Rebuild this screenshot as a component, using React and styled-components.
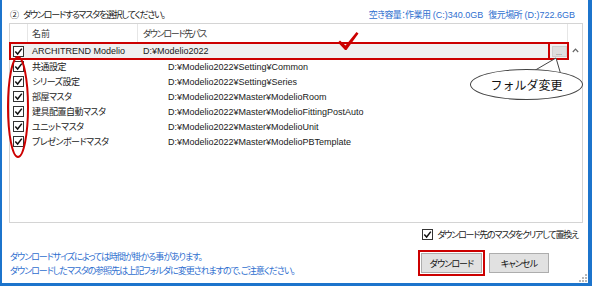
import React from "react";
import styled, { createGlobalStyle } from "styled-components";

const FONT = `"Liberation Sans", "Noto Sans CJK JP", sans-serif`;
const RED = "#cc0000";
const BLUE = "#1c74cc";
const BLUE_TEXT = "#2f6fcf";

const Global = createGlobalStyle`
  html, body { margin: 0; padding: 0; background: #fff; }
  body { font-family: ${FONT}; }
`;

const Stage = styled.div`
  position: relative;
  width: 592px;
  height: 286px;
`;

const Window = styled.div`
  width: 592px;
  height: 286px;
  box-sizing: border-box;
  border-left: 2px solid ${BLUE};
  border-right: 4px solid ${BLUE};
  border-bottom: 3px solid ${BLUE};
  background: #fff;
  font-family: ${FONT};
  font-size: 9px;
  font-feature-settings: "palt";
  color: #1a1a1a;
  display: flex;
  flex-direction: column;
`;

const JP = styled.span`
  letter-spacing: ${(p) => p.$ls}px;
`;

const TopBar = styled.div`
  height: 23px;
  box-sizing: border-box;
  padding: 6px 13px 0 8px;
  display: flex;
  justify-content: space-between;
  align-items: center;
`;

const Title = styled.span`
  color: #222;
  letter-spacing: -1.2px;
`;

const StepNum = styled.span`
  margin-right: 4px;
  letter-spacing: 0;
`;

const Capacity = styled.span`
  color: ${BLUE_TEXT};
  white-space: pre;
`;

const List = styled.div`
  margin-left: 7px;
  width: 574px;
  height: 200px;
  box-sizing: border-box;
  border: 1px solid #d4d4d4;
  display: flex;
  flex-direction: column;
`;

const Header = styled.div`
  height: 19px;
  display: grid;
  grid-template-columns: 18px 110px 430px 1fr;
`;

const HeadCell = styled.div`
  box-sizing: border-box;
  border-right: ${(p) => (p.$last ? "none" : "1px solid #e6e6e6")};
  padding-left: ${(p) => p.$pad || 0}px;
  letter-spacing: ${(p) => p.$ls || 0}px;
  display: flex;
  align-items: center;
  color: #3a3a3a;
`;

const Body = styled.div`
  flex: 1;
  display: flex;
`;

const Rows = styled.div`
  width: 558px;
  display: flex;
  flex-direction: column;
`;

const Row = styled.div`
  height: ${(p) => p.$h}px;
  display: grid;
  grid-template-columns: 18px 110px 1fr auto;
  align-items: center;
  background: ${(p) => (p.$selected ? "#f0f0f0" : "transparent")};
  outline: ${(p) => (p.$selected ? `2px solid ${RED}` : "none")};
  outline-offset: -1px;
`;

const CheckCell = styled.div`
  display: flex;
  align-items: center;
  padding-left: 3px;
`;

const NameCell = styled.div`
  padding-left: 4px;
  white-space: nowrap;
  letter-spacing: ${(p) => p.$ls || 0}px;
`;

const PathCell = styled.div`
  padding-left: ${(p) => p.$indent}px;
  white-space: nowrap;
`;

const ButtonCell = styled.div`
  width: 20px;
  height: 100%;
  box-sizing: border-box;
  border-left: 2px solid ${RED};
  display: flex;
  align-items: center;
  justify-content: center;
`;

const MiniButton = styled.div`
  width: 15px;
  height: 11px;
  box-sizing: border-box;
  background: #dedede;
  border: 1px solid #cfcfcf;
  font-size: 7px;
  line-height: 12px;
  text-align: center;
  color: #555;
`;

const ScrollCol = styled.div`
  flex: 1;
  display: flex;
  justify-content: center;
  padding-top: 5px;
`;

const Box = styled.span`
  width: 11px;
  height: 11px;
  box-sizing: border-box;
  border: 1px solid #333;
  background: #fff;
  display: inline-flex;
  align-items: center;
  justify-content: center;
  flex: none;
`;

const OptionRow = styled.div`
  margin-top: 5px;
  margin-right: 10px;
  align-self: flex-end;
  height: 12px;
  display: flex;
  align-items: center;
  gap: 4px;
  color: #222;
  letter-spacing: -1.2px;
`;

const BottomRow = styled.div`
  margin-top: 10px;
  display: flex;
  justify-content: space-between;
  align-items: flex-start;
  padding: 0 39px 0 8px;
`;

const Notes = styled.div`
  color: ${BLUE_TEXT};
  line-height: 14px;
  letter-spacing: -1.05px;
`;

const Buttons = styled.div`
  display: flex;
  gap: 4px;
  align-items: flex-start;
`;

const HighlightWrap = styled.div`
  border: 2px solid ${RED};
  padding: 1px;
`;

const Button = styled.button`
  width: ${(p) => p.$w}px;
  height: 20px;
  margin-top: ${(p) => p.$mt || 0}px;
  padding: 0;
  box-sizing: border-box;
  background: #e1e1e1;
  border: 1px solid #adadad;
  font-family: ${FONT};
  font-feature-settings: "palt";
  font-size: 9px;
  letter-spacing: -0.9px;
  color: #111;
`;

const Overlay = styled.svg`
  position: absolute;
  left: 0;
  top: 0;
  pointer-events: none;
`;

const Callout = styled.div`
  position: absolute;
  left: 470px;
  top: 69px;
  width: 113px;
  height: 31px;
  box-sizing: border-box;
  border: 1px solid #444;
  border-radius: 50%;
  background: #fff;
  display: flex;
  align-items: center;
  justify-content: center;
  font-family: "Noto Sans CJK JP", sans-serif;
  font-size: 12px;
  color: #111;
`;

const Grip = styled.svg`
  position: absolute;
  right: 5px;
  bottom: 4px;
`;

function Check() {
  return (
    <Box>
      <svg width="9" height="9" viewBox="0 0 9 9">
        <path d="M1.3 4.6 L3.6 7 L7.8 1.6" fill="none" stroke="#111" strokeWidth="1.5" />
      </svg>
    </Box>
  );
}

const children = [
  ["共通設定", "D:¥Modelio2022¥Setting¥Common"],
  ["シリーズ設定", "D:¥Modelio2022¥Setting¥Series"],
  ["部屋マスタ", "D:¥Modelio2022¥Master¥ModelioRoom"],
  ["建具配置自動マスタ", "D:¥Modelio2022¥Master¥ModelioFittingPostAuto"],
  ["ユニットマスタ", "D:¥Modelio2022¥Master¥ModelioUnit"],
  ["プレゼンボードマスタ", "D:¥Modelio2022¥Master¥ModelioPBTemplate"],
];

export default function App() {
  return (
    <>
      <Global />
      <Stage>
        <Window>
          <TopBar>
            <Title>
              <StepNum>②</StepNum>ダウンロードするマスタを選択してください。
            </Title>
            <Capacity>
              <JP $ls={-0.6}>空き容量：作業用</JP> (C:)340.0GB  <JP $ls={-0.6}>復元場所</JP> (D:)722.6GB
            </Capacity>
          </TopBar>
          <List>
            <Header>
              <HeadCell />
              <HeadCell $pad={4}>名前</HeadCell>
              <HeadCell $pad={5} $ls={-1.3}>ダウンロード先パス</HeadCell>
              <HeadCell $last />
            </Header>
            <Body>
              <Rows>
                <Row $h={16} $selected>
                  <CheckCell>
                    <Check />
                  </CheckCell>
                  <NameCell>ARCHITREND Modelio</NameCell>
                  <PathCell $indent={5}>D:¥Modelio2022</PathCell>
                  <ButtonCell>
                    <MiniButton>...</MiniButton>
                  </ButtonCell>
                </Row>
                {children.map(([name, path]) => (
                  <Row $h={15} key={name}>
                    <CheckCell>
                      <Check />
                    </CheckCell>
                    <NameCell $ls={-0.5}>{name}</NameCell>
                    <PathCell $indent={30}>{path}</PathCell>
                  </Row>
                ))}
              </Rows>
              <ScrollCol>
                <svg width="7" height="5" viewBox="0 0 7 5">
                  <path d="M0.8 4 L3.5 1.2 L6.2 4" fill="none" stroke="#666" strokeWidth="1.2" />
                </svg>
              </ScrollCol>
            </Body>
          </List>
          <OptionRow>
            <Check />
            <span>ダウンロード先のマスタをクリアして置換え</span>
          </OptionRow>
          <BottomRow>
            <Notes>
              ダウンロードサイズによっては時間が掛かる事があります。
              <br />
              ダウンロードしたマスタの参照先は上記フォルダに変更されますので、ご注意ください。
            </Notes>
            <Buttons>
              <HighlightWrap>
                <Button $w={61}>ダウンロード</Button>
              </HighlightWrap>
              <Button $w={60} $mt={3}>キャンセル</Button>
            </Buttons>
          </BottomRow>
        </Window>
        <Overlay width="592" height="286" viewBox="0 0 592 286">
          <ellipse cx="18" cy="107" rx="10" ry="50" fill="none" stroke={RED} strokeWidth="2" />
          <path d="M338 42.5 L340 40.5 L345.5 45.5 L356.5 32 L358.5 33.5 L346.5 50 L345 50 Z" fill={RED} />
          <polygon points="532,72 556,58 561,75" fill="#fff" stroke="#444" strokeWidth="1" />
        </Overlay>
        <Callout>フォルダ変更</Callout>
        <Grip width="8" height="8" viewBox="0 0 8 8">
          <rect x="6" y="0" width="2" height="2" fill="#b8b8b8" />
          <rect x="6" y="3" width="2" height="2" fill="#b8b8b8" />
          <rect x="3" y="3" width="2" height="2" fill="#b8b8b8" />
          <rect x="6" y="6" width="2" height="2" fill="#b8b8b8" />
          <rect x="3" y="6" width="2" height="2" fill="#b8b8b8" />
          <rect x="0" y="6" width="2" height="2" fill="#b8b8b8" />
        </Grip>
      </Stage>
    </>
  );
}
